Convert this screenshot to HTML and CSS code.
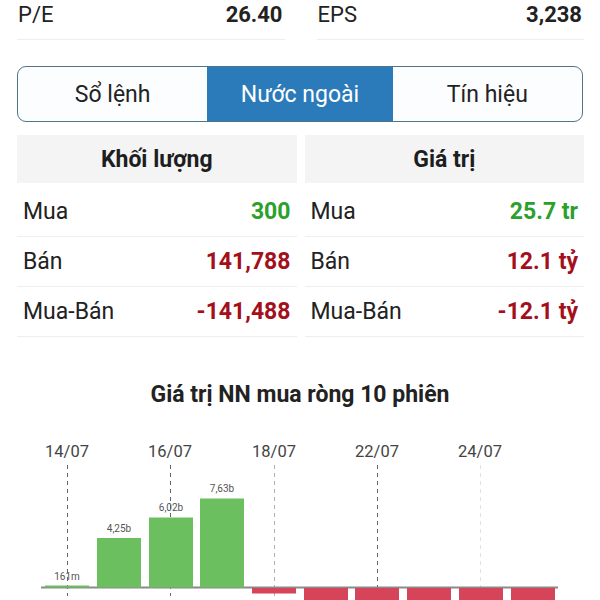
FILE: index.html
```html
<!DOCTYPE html>
<html lang="vi">
<head>
<meta charset="UTF-8" />
<meta name="viewport" content="width=device-width, initial-scale=1" />
<title>Nước ngoài</title>
<link rel="stylesheet" href="styles.css">
</head>
<body>

<div class="page">
  <div class="stats">
    <div class="stat"><span>P/E</span><b>26.40</b></div>
    <div class="stat"><span>EPS</span><b>3,238</b></div>
  </div>

  <div class="tabs">
    <div class="tab">Sổ lệnh</div>
    <div class="tab active">Nước ngoài</div>
    <div class="tab">Tín hiệu</div>
  </div>

  <div class="split">
    <div class="col">
      <div class="head">Khối lượng</div>
      <div class="row"><span>Mua</span><b class="up">300</b></div>
      <div class="row"><span>Bán</span><b class="down">141,788</b></div>
      <div class="row"><span>Mua-Bán</span><b class="down">-141,488</b></div>
    </div>
    <div class="col">
      <div class="head">Giá trị</div>
      <div class="row"><span>Mua</span><b class="up">25.7 tr</b></div>
      <div class="row"><span>Bán</span><b class="down">12.1 tỷ</b></div>
      <div class="row"><span>Mua-Bán</span><b class="down">-12.1 tỷ</b></div>
    </div>
  </div>
</div>

<div class="chart">
  <h2>Giá trị NN mua ròng 10 phiên</h2>
  <svg class="plot" width="600" height="170" viewBox="0 0 600 170">
    <g class="dates">
      <text x="67" y="27">14/07</text>
      <text x="170" y="27">16/07</text>
      <text x="274" y="27">18/07</text>
      <text x="377" y="27">22/07</text>
      <text x="480" y="27">24/07</text>
    </g>
    <g class="grid">
      <line x1="67.5" y1="35" x2="67.5" y2="166" />
      <line x1="170.5" y1="35" x2="170.5" y2="166" />
      <line x1="274.5" y1="35" x2="274.5" y2="166" class="light" />
      <line x1="377.5" y1="35" x2="377.5" y2="158" />
      <line x1="480.5" y1="35" x2="480.5" y2="158" class="faint" />
    </g>
    <line class="axis" x1="41" y1="157.5" x2="558" y2="157.5" />
    <g class="pos">
      <rect x="45" y="155.5" width="44" height="2" />
      <rect x="97" y="108" width="44" height="49.5" />
      <rect x="149" y="87.5" width="44" height="70" />
      <rect x="200" y="68.5" width="44" height="89" />
    </g>
    <g class="neg">
      <rect x="252" y="158" width="44" height="5.5" />
      <rect x="304" y="158" width="44" height="14" />
      <rect x="355" y="158" width="44" height="14" />
      <rect x="407" y="158" width="44" height="14" />
      <rect x="459" y="158" width="44" height="14" />
      <rect x="511" y="158" width="44" height="14" />
    </g>
    <g class="vals">
      <text x="67" y="150">161m</text>
      <text x="119" y="101.5">4,25b</text>
      <text x="171" y="81">6,02b</text>
      <text x="222" y="61.5">7,63b</text>
    </g>
  </svg>
</div>

</body>
</html>
```

FILE: styles.css
```css
/* Base */
body {
  margin: 0;
  font-family: Roboto, "Noto Sans", sans-serif;
  color: #222;
  background: #fff;
  width: 600px;
  height: 600px;
  overflow: hidden;
}
b {
  font-weight: 700;
}

.page {
  padding: 0 16px 0 17px;
}

/* P/E, EPS */
.stats {
  display: grid;
  grid-template-columns: 1fr 1fr;
  column-gap: 32px;
}
.stat {
  display: flex;
  justify-content: space-between;
  padding: 3px 2px 12px 1px;
  font-size: 22px;
  line-height: 24px;
  border-bottom: 1px solid #eeeeee;
}

/* Tabs */
.tabs {
  display: grid;
  grid-template-columns: 190fr 186fr 190fr;
  margin: 26px 1px 0 0;
  height: 56px;
  box-sizing: border-box;
  border: 1.5px solid #4f7686;
  border-radius: 9px;
  overflow: hidden;
  background: #fbfdfe;
}
.tab {
  display: flex;
  align-items: center;
  justify-content: center;
  font-size: 23px;
  color: #222;
}
.tab.active {
  background: #2b7bba;
  color: #fff;
}

/* Foreign trade table */
.split {
  display: grid;
  grid-template-columns: 1fr 1fr;
  column-gap: 8px;
  margin-top: 13px;
}
.head {
  height: 48px;
  display: flex;
  align-items: center;
  justify-content: center;
  background: #f4f4f4;
  font-size: 23px;
  font-weight: 700;
  color: #1e1e1e;
  margin-bottom: 4px;
}
.row {
  display: flex;
  justify-content: space-between;
  align-items: center;
  height: 49px;
  padding: 0 6px;
  border-bottom: 1px solid #eeeeee;
  font-size: 23px;
}
.up {
  color: #2ca02c;
}
.down {
  color: #a3101c;
}

/* Chart */
.chart h2 {
  margin: 46px 0 23px;
  text-align: center;
  font-size: 23px;
  line-height: 24px;
  font-weight: 700;
  color: #222;
}
.plot {
  display: block;
}
.dates text {
  font-family: Roboto, sans-serif;
  font-size: 16.5px;
  fill: #444;
  text-anchor: middle;
}
.grid line {
  stroke: #666;
  stroke-width: 1;
  stroke-dasharray: 4 4;
}
.grid .light {
  stroke: #b0b0b0;
}
.grid .faint {
  stroke: #e2e2e2;
}
.axis {
  stroke: #8a8a8a;
  stroke-width: 2;
}
.pos rect {
  fill: #6cbf5f;
}
.neg rect {
  fill: #d6445a;
}
.vals text {
  font-family: Roboto, sans-serif;
  font-size: 10px;
  fill: #555;
  text-anchor: middle;
}
```
